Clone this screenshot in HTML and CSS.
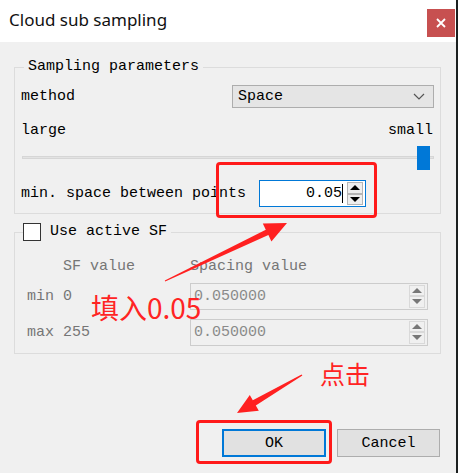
FILE: index.html
```html
<!DOCTYPE html>
<html lang="zh">
  <head>
    <meta charset="UTF-8" />
    <meta name="viewport" content="width=device-width, initial-scale=1.0" />
    <title>Cloud sub sampling</title>
    <link rel="stylesheet" href="styles.css">
  </head>
  <body>
    <div class="dialog">
      <div class="titlebar">
        <span class="title">Cloud sub sampling</span>
        <span class="close-btn">
          <svg width="10" height="10" viewBox="0 0 10 10">
            <path d="M1 1 L9 9 M9 1 L1 9" stroke="#fff" stroke-width="1.8" />
          </svg>
        </span>
      </div>

      <div class="content">
        <fieldset class="group params">
          <legend>Sampling parameters</legend>

          <div class="row method-row">
            <span>method</span>
            <div class="combo">
              <span>Space</span>
              <svg width="12" height="7" viewBox="0 0 12 7">
                <path d="M1 1 L6 6 L11 1" fill="none" stroke="#555" stroke-width="1.2" />
              </svg>
            </div>
          </div>

          <div class="row scale-row">
            <span>large</span>
            <span>small</span>
          </div>

          <div class="slider">
            <div class="track"></div>
            <div class="handle"></div>
          </div>

          <div class="row space-row">
            <span>min. space between points</span>
            <div class="spin active">
              <span class="spin-value">0.05<span class="caret"></span></span>
              <div class="spin-btns">
                <span class="up"></span>
                <span class="down"></span>
              </div>
            </div>
          </div>
        </fieldset>

        <fieldset class="group sf">
          <legend><span class="checkbox"></span>Use active SF</legend>

          <div class="sf-grid">
            <span></span>
            <span>SF value</span>
            <span>Spacing value</span>

            <span>min</span>
            <span>0</span>
            <div class="spin disabled">
              <span class="spin-value">0.050000</span>
              <div class="spin-btns">
                <span class="up"></span>
                <span class="down"></span>
              </div>
            </div>

            <span>max</span>
            <span>255</span>
            <div class="spin disabled">
              <span class="spin-value">0.050000</span>
              <div class="spin-btns">
                <span class="up"></span>
                <span class="down"></span>
              </div>
            </div>
          </div>
        </fieldset>

        <div class="buttons">
          <button class="btn default">OK</button>
          <button class="btn">Cancel</button>
        </div>
      </div>

      <!-- red annotations drawn over the screenshot -->
      <div class="mark mark-input"></div>
      <div class="mark mark-ok"></div>
      <svg class="arrows" width="456" height="473" viewBox="0 0 456 473">
        <polygon fill="#ff2020" points="164.8,280.5 265.8,229.7 262.8,223.4 287,223 271.4,241.4 268.4,235.1 165.2,281.5" />
        <polygon fill="#ff2020" points="301.6,374.4 252.8,400.3 249.8,395.1 237,413 258.8,410.7 255.8,405.5 302.4,375.6" />
      </svg>
      <span class="note note-fill">填入0.05</span>
      <span class="note note-click">点击</span>
    </div>
  </body>
</html>
```

FILE: styles.css
```css
* {
  margin: 0;
  padding: 0;
  box-sizing: border-box;
}

body {
  background-color: #1c2020;
  width: 458px;
  height: 473px;
  overflow: hidden;
}

.dialog {
  position: relative;
  width: 456px;
  height: 473px;
  background-color: #f0f0f0;
  display: flex;
  flex-direction: column;
  font-family: "Liberation Mono", monospace;
  font-size: 15px;
  color: #000;
}

.titlebar {
  height: 42px;
  background-color: #fff;
  display: flex;
  justify-content: space-between;
  padding-left: 9px;
  padding-right: 1px;
}

.title {
  font-family: "Noto Sans", sans-serif;
  font-size: 17px;
  line-height: 42px;
  color: #111;
  margin-top: -1px;
}

.close-btn {
  width: 28px;
  height: 28px;
  margin-top: 9px;
  background-color: #c75050;
  display: flex;
  align-items: center;
  justify-content: center;
}

.content {
  flex: 1;
  display: flex;
  flex-direction: column;
  padding-top: 17px;
  padding-bottom: 16px;
}

.group {
  border: 1px solid #dcdcdc;
  margin: 0 15px 0 14px;
  min-width: 0;
}

.group legend {
  line-height: 16px;
  padding: 0 4px;
  margin-left: 3px;
}

.params {
  padding: 10px 6px 6px 6px;
}

.row {
  display: flex;
  align-items: center;
  justify-content: space-between;
}

.combo {
  width: 202px;
  height: 23px;
  background-color: #e5e5e5;
  border: 1px solid #adadad;
  display: flex;
  align-items: center;
  justify-content: space-between;
  padding: 0 8px 0 5px;
}

.scale-row {
  margin-top: 14px;
  line-height: 18px;
  padding-right: 1px;
}

.slider {
  position: relative;
  height: 24px;
  margin-top: 6px;
}

.track {
  position: absolute;
  left: 1px;
  right: 0;
  top: 10px;
  height: 3px;
  background-color: #e3e3e3;
  border: 1px solid #d6d6d6;
}

.handle {
  position: absolute;
  right: 4px;
  top: 0;
  width: 13px;
  height: 24px;
  background-color: #0078d7;
}

.space-row {
  margin-top: 10px;
  justify-content: flex-start;
  gap: 13px;
}

.spin {
  height: 27px;
  display: flex;
  align-items: center;
  justify-content: space-between;
  border: 1px solid #ccc;
}

.spin.active {
  width: 107px;
  background-color: #fff;
  border-color: #0078d7;
  padding-right: 2px;
}

.spin.active .spin-value {
  flex: 1;
  text-align: right;
  padding-right: 4px;
  display: flex;
  justify-content: flex-end;
  align-items: center;
}

.caret {
  display: inline-block;
  width: 1px;
  height: 19px;
  background-color: #000;
}

.spin-btns {
  display: flex;
  flex-direction: column;
  width: 16px;
  height: 23px;
}

.spin-btns span {
  flex: 1;
  display: flex;
  align-items: center;
  justify-content: center;
}

.spin.active .spin-btns span {
  border: 1px solid #b5b5b5;
  background-color: #eee;
}

.up::after,
.down::after {
  content: "";
  border-left: 5px solid transparent;
  border-right: 5px solid transparent;
}

.up::after {
  border-bottom: 5px solid #000;
}

.down::after {
  border-top: 5px solid #000;
}

.spin.disabled {
  color: #8a8a8a;
  padding: 0 2px 0 3px;
}

.spin.disabled .spin-btns span {
  border: 1px solid #d9d9d9;
}

.spin.disabled .up::after {
  border-bottom-color: #777;
}

.spin.disabled .down::after {
  border-top-color: #777;
}

.sf {
  margin-top: 9px;
  padding: 16px 12px 12px 12px;
}

.sf legend {
  display: flex;
  align-items: center;
  line-height: 18px;
  padding: 0 4px 0 0;
  margin-left: -4px;
}

.checkbox {
  width: 18px;
  height: 18px;
  background-color: #fff;
  border: 1px solid #333;
  margin-right: 9px;
}

.sf-grid {
  display: grid;
  grid-template-columns: 36px 127px 1fr;
  grid-template-rows: 18px 27px 27px;
  row-gap: 6px;
  align-items: center;
  color: #767676;
}

.sf-grid > :nth-child(n + 4) {
  margin-top: 3px;
}

.sf-grid > :nth-child(n + 7) {
  margin-top: 9px;
}

.buttons {
  margin-top: auto;
  display: flex;
  justify-content: flex-end;
  gap: 11px;
  padding-right: 16px;
}

.btn {
  font-family: "Liberation Mono", monospace;
  font-size: 15px;
  height: 28px;
  width: 103px;
  background-color: #e1e1e1;
  border: 1px solid #adadad;
  color: #000;
}

.btn.default {
  width: 104px;
  border: 2px solid #0078d7;
}

/* annotations */
.mark {
  position: absolute;
  border: 3px solid #ff1a1a;
  border-radius: 4px;
}

.mark-input {
  left: 216px;
  top: 162px;
  width: 161px;
  height: 56px;
}

.mark-ok {
  left: 196px;
  top: 420px;
  width: 136px;
  height: 44px;
}

.arrows {
  position: absolute;
  left: 0;
  top: 0;
  pointer-events: none;
}

.note {
  position: absolute;
  font-family: "Noto Sans CJK SC", sans-serif;
  color: #ff2424;
  line-height: 1;
}

.note-fill {
  left: 91px;
  top: 293px;
  font-size: 28px;
}

.note-click {
  left: 320px;
  top: 361px;
  font-size: 25px;
}
```
